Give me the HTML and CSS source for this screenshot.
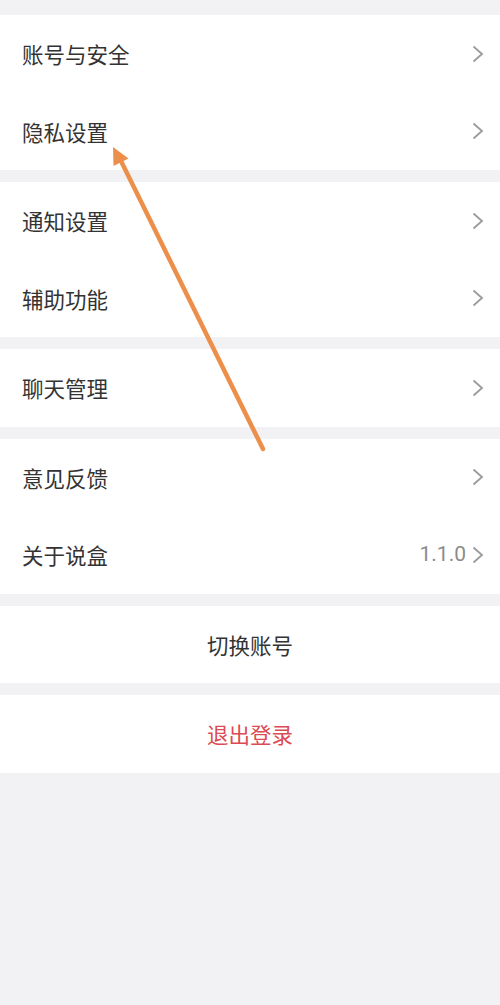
FILE: index.html
```html
<!DOCTYPE html>
<html lang="zh-CN">
<head>
<meta charset="utf-8">
<title>设置</title>
<link rel="stylesheet" href="styles.css">
</head>
<body>
<div class="page">
  <section class="group">
    <div class="row"><span class="label">账号与安全</span><span class="right"><svg class="chev" viewBox="0 0 12 18"><path d="M1.5 1.5 L10 9 L1.5 16.5"/></svg></span></div>
    <div class="row"><span class="label">隐私设置</span><span class="right"><svg class="chev" viewBox="0 0 12 18"><path d="M1.5 1.5 L10 9 L1.5 16.5"/></svg></span></div>
  </section>
  <section class="group">
    <div class="row"><span class="label">通知设置</span><span class="right"><svg class="chev" viewBox="0 0 12 18"><path d="M1.5 1.5 L10 9 L1.5 16.5"/></svg></span></div>
    <div class="row"><span class="label">辅助功能</span><span class="right"><svg class="chev" viewBox="0 0 12 18"><path d="M1.5 1.5 L10 9 L1.5 16.5"/></svg></span></div>
  </section>
  <section class="group">
    <div class="row"><span class="label">聊天管理</span><span class="right"><svg class="chev" viewBox="0 0 12 18"><path d="M1.5 1.5 L10 9 L1.5 16.5"/></svg></span></div>
  </section>
  <section class="group">
    <div class="row"><span class="label">意见反馈</span><span class="right"><svg class="chev" viewBox="0 0 12 18"><path d="M1.5 1.5 L10 9 L1.5 16.5"/></svg></span></div>
    <div class="row"><span class="label">关于说盒</span><span class="right"><span class="version">1.1.0</span><svg class="chev" viewBox="0 0 12 18"><path d="M1.5 1.5 L10 9 L1.5 16.5"/></svg></span></div>
  </section>
  <section class="group">
    <div class="row center">切换账号</div>
  </section>
  <section class="group">
    <div class="row center danger">退出登录</div>
  </section>
</div>
<svg class="annot" viewBox="0 0 500 1005" width="500" height="1005">
  <line x1="263" y1="449" x2="121" y2="161" stroke="#ec8f4b" stroke-width="4.5" stroke-linecap="round"/>
  <polygon points="113,147 128.5,158.5 113.5,166" fill="#ec8f4b"/>
</svg>
</body>
</html>
```
FILE: styles.css
```css
html, body {
  margin: 0;
  padding: 0;
}
body {
  background: #f2f2f4;
  font-family: "Noto Sans CJK SC", "Noto Sans", sans-serif;
  color: #333333;
  width: 500px;
  height: 1005px;
  position: relative;
  overflow: hidden;
}
.page {
  padding-top: 15px;
  display: flex;
  flex-direction: column;
  gap: 12px;
}
.group {
  background: #ffffff;
  display: flex;
  flex-direction: column;
}
.row {
  height: 77.5px;
  display: flex;
  align-items: center;
  justify-content: space-between;
  padding: 0 16px 0 22px;
  font-size: 21.5px;
  line-height: 1;
}
.right {
  display: flex;
  align-items: center;
  gap: 6px;
}
.version {
  color: #8c8c8c;
  font-family: "Roboto", "Noto Sans", sans-serif;
  font-size: 21px;
}
.chev {
  width: 12px;
  height: 18px;
  fill: none;
  stroke: #9a9a9a;
  stroke-width: 1.8;
}
.row.center {
  justify-content: center;
  padding: 0;
}
.danger {
  color: #dc4b53;
}
.annot {
  position: absolute;
  left: 0;
  top: 0;
  pointer-events: none;
}
```
